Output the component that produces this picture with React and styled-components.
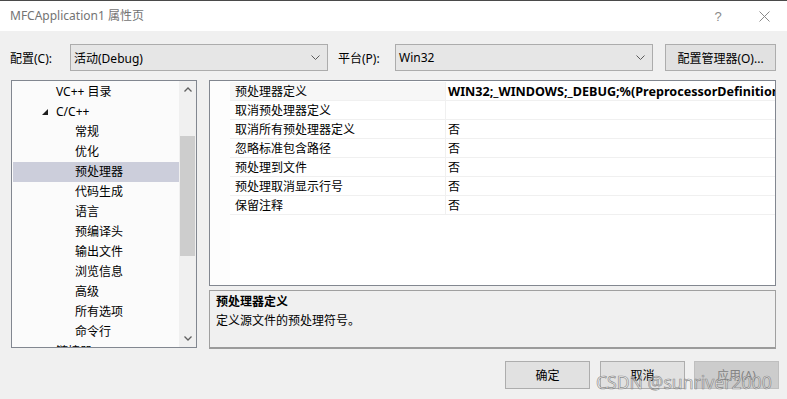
import React from "react";
import styled, { createGlobalStyle } from "styled-components";

const Global = createGlobalStyle`
  html, body { margin: 0; padding: 0; background: #f0f0f0; }
  body { font-family: "Noto Sans", "Noto Sans CJK SC", sans-serif; font-size: 12px; color: #000; }
  * { box-sizing: border-box; }
`;

const Window = styled.div`
  position: relative;
  width: 787px;
  height: 399px;
  display: flex;
  flex-direction: column;
  background: #f0f0f0;
  overflow: hidden;
`;

const TitleBar = styled.div`
  height: 31px;
  border-top: 1px solid #4a4a4a;
  background: #ffffff;
  display: flex;
  align-items: center;
  padding-left: 10px;
`;

const TitleText = styled.div`
  color: #737373;
  font-size: 12px;
  line-height: 16px;
`;

const TitleButtons = styled.div`
  margin-left: auto;
  display: flex;
  height: 100%;
`;

const TitleButton = styled.div`
  width: 46px;
  height: 100%;
  display: flex;
  align-items: center;
  justify-content: center;
  color: #8a8a8a;
  font-size: 13px;
  font-family: "Liberation Sans", sans-serif;
`;

const Toolbar = styled.div`
  margin-top: 13px;
  height: 27px;
  display: flex;
  align-items: center;
  padding-left: 10px;
`;

const Label = styled.div`
  width: ${(p) => p.$w}px;
  margin-left: ${(p) => p.$ml || 0}px;
  white-space: nowrap;
`;

const Select = styled.div`
  width: 258px;
  height: 27px;
  border: 1px solid #acacac;
  background: #e6e6e6;
  display: flex;
  align-items: center;
  padding: 0 7px 0 3px;
`;

const SelectText = styled.div`
  flex: 1;
`;

const PlainButton = styled.div`
  width: ${(p) => p.$w || 85}px;
  height: ${(p) => p.$h || 28}px;
  margin-left: ${(p) => p.$ml || 0}px;
  border: 1px solid ${(p) => (p.$disabled ? "#bfbfbf" : "#adadad")};
  background: ${(p) => (p.$disabled ? "#cccccc" : "#e1e1e1")};
  color: ${(p) => (p.$disabled ? "#838383" : "#000")};
  display: flex;
  align-items: center;
  justify-content: center;
  white-space: nowrap;
`;

const Main = styled.div`
  margin-top: 9px;
  height: 269px;
  display: flex;
  padding-left: 11px;
  gap: 12px;
`;

const Tree = styled.div`
  width: 186px;
  height: 268px;
  border: 1px solid #828790;
  background: #fbfbfb;
  display: flex;
`;

const TreeList = styled.div`
  flex: 1;
  padding: 1px 0 0 1px;
  overflow: hidden;
`;

const TreeRow = styled.div`
  height: 20px;
  display: flex;
  align-items: center;
  padding-left: ${(p) => p.$indent}px;
  background: ${(p) => (p.$selected ? "#cccedb" : "transparent")};
  white-space: nowrap;
  line-height: 20px;
`;

const Expander = styled.div`
  width: 14px;
  height: 20px;
  display: flex;
  align-items: center;
`;

const Scrollbar = styled.div`
  width: 17px;
  background: #f0f0f0;
  display: flex;
  flex-direction: column;
`;

const ScrollArrow = styled.div`
  height: 17px;
  display: flex;
  align-items: center;
  justify-content: center;
`;

const Track = styled.div`
  flex: 1;
  padding: 0 1px;
`;

const Thumb = styled.div`
  margin-top: 38px;
  height: 120px;
  background: #cdcdcd;
`;

const RightColumn = styled.div`
  width: 567px;
  display: flex;
  flex-direction: column;
  gap: 4px;
`;

const Grid = styled.div`
  height: 206px;
  border: 1px solid #828790;
  background: #ffffff;
  display: flex;
`;

const Gutter = styled.div`
  width: 20px;
  background: #fdfdfd;
`;

const GridRows = styled.div`
  flex: 1;
  padding-top: 1px;
  overflow: hidden;
`;

const GridRow = styled.div`
  height: 19px;
  display: grid;
  grid-template-columns: 216px 1fr;
  border-bottom: 1px solid #f0f0f0;
  line-height: 17px;
`;

const NameCell = styled.div`
  padding: 1px 0 0 5px;
  border-right: 1px solid #f0f0f0;
  background: ${(p) => (p.$active ? "#f7f7f7" : "#fff")};
  white-space: nowrap;
  overflow: hidden;
`;

const ValueCell = styled.div`
  padding: 1px 0 0 2px;
  white-space: nowrap;
  overflow: hidden;
  font-weight: ${(p) => (p.$bold ? 700 : 400)};
  font-size: ${(p) => (p.$bold ? 12.6 : 12)}px;
`;

const Description = styled.div`
  flex: 1;
  border: 1px solid #a0a0a0;
  border-bottom: 2px solid #9b9b9b;
  background: #f0f0f0;
  padding: 1px 6px;
  line-height: 19px;
`;

const DescTitle = styled.div`
  font-weight: 700;
`;

const Footer = styled.div`
  margin-top: 12px;
  display: flex;
  justify-content: flex-end;
  padding-right: 8px;
`;

const Watermark = styled.div`
  position: absolute;
  left: 596px;
  top: 370px;
  font-family: "Noto Sans", "Liberation Sans", sans-serif;
  font-size: 17.6px;
  line-height: 24px;
  color: rgba(255, 255, 255, 0.5);
  -webkit-text-stroke: 0.7px rgba(110, 110, 110, 0.75);
  white-space: nowrap;
  pointer-events: none;
`;

const Chevron = ({ up }) => (
  <svg width="8" height="5" viewBox="0 0 8 5">
    <polyline
      points={up ? "0.5,4.5 4,1 7.5,4.5" : "0.5,0.5 4,4 7.5,0.5"}
      fill="none"
      stroke="#606060"
      strokeWidth="1.3"
    />
  </svg>
);

const ComboChevron = () => (
  <svg width="9" height="5" viewBox="0 0 9 5">
    <polyline points="0.5,0.5 4.5,4.5 8.5,0.5" fill="none" stroke="#5a5a5a" strokeWidth="1" />
  </svg>
);

const ExpandedTriangle = () => (
  <svg width="6" height="6" viewBox="0 0 6 6">
    <polygon points="6,0 6,6 0,6" fill="#1e1e1e" />
  </svg>
);

const CloseIcon = () => (
  <svg width="11" height="11" viewBox="0 0 11 11">
    <path d="M0.5 0.5 L10.5 10.5 M10.5 0.5 L0.5 10.5" stroke="#8a8a8a" strokeWidth="1" />
  </svg>
);

const treeItems = [
  { text: "VC++ 目录", indent: 43 },
  { text: "C/C++", indent: 29, expanded: true },
  { text: "常规", indent: 62 },
  { text: "优化", indent: 62 },
  { text: "预处理器", indent: 62, selected: true },
  { text: "代码生成", indent: 62 },
  { text: "语言", indent: 62 },
  { text: "预编译头", indent: 62 },
  { text: "输出文件", indent: 62 },
  { text: "浏览信息", indent: 62 },
  { text: "高级", indent: 62 },
  { text: "所有选项", indent: 62 },
  { text: "命令行", indent: 62 },
  { text: "链接器", indent: 29, collapsed: true },
];

const props = [
  { name: "预处理器定义", value: "WIN32;_WINDOWS;_DEBUG;%(PreprocessorDefinitions)", bold: true, active: true },
  { name: "取消预处理器定义", value: "" },
  { name: "取消所有预处理器定义", value: "否" },
  { name: "忽略标准包含路径", value: "否" },
  { name: "预处理到文件", value: "否" },
  { name: "预处理取消显示行号", value: "否" },
  { name: "保留注释", value: "否" },
];

export default function App() {
  return (
    <>
      <Global />
      <Window>
        <TitleBar>
          <TitleText>MFCApplication1 属性页</TitleText>
          <TitleButtons>
            <TitleButton>?</TitleButton>
            <TitleButton>
              <CloseIcon />
            </TitleButton>
          </TitleButtons>
        </TitleBar>

        <Toolbar>
          <Label $w={60}>配置(C):</Label>
          <Select>
            <SelectText>活动(Debug)</SelectText>
            <ComboChevron />
          </Select>
          <Label $w={57} $ml={10}>平台(P):</Label>
          <Select>
            <SelectText>Win32</SelectText>
            <ComboChevron />
          </Select>
          <PlainButton $w={111} $h={27} $ml={12}>配置管理器(O)...</PlainButton>
        </Toolbar>

        <Main>
          <Tree>
            <TreeList>
              {treeItems.map((it) => (
                <TreeRow key={it.text} $indent={it.indent} $selected={it.selected}>
                  {(it.expanded || it.collapsed) && (
                    <Expander>{it.expanded && <ExpandedTriangle />}</Expander>
                  )}
                  {it.text}
                </TreeRow>
              ))}
            </TreeList>
            <Scrollbar>
              <ScrollArrow>
                <Chevron up />
              </ScrollArrow>
              <Track>
                <Thumb />
              </Track>
              <ScrollArrow>
                <Chevron />
              </ScrollArrow>
            </Scrollbar>
          </Tree>

          <RightColumn>
            <Grid>
              <Gutter />
              <GridRows>
                {props.map((p) => (
                  <GridRow key={p.name}>
                    <NameCell $active={p.active}>{p.name}</NameCell>
                    <ValueCell $bold={p.bold}>{p.value}</ValueCell>
                  </GridRow>
                ))}
              </GridRows>
            </Grid>
            <Description>
              <DescTitle>预处理器定义</DescTitle>
              <div>定义源文件的预处理符号。</div>
            </Description>
          </RightColumn>
        </Main>

        <Footer>
          <PlainButton>确定</PlainButton>
          <PlainButton $ml={10}>取消</PlainButton>
          <PlainButton $ml={9} $disabled>应用(A)</PlainButton>
        </Footer>

        <Watermark>CSDN @sunriver2000</Watermark>
      </Window>
    </>
  );
}
